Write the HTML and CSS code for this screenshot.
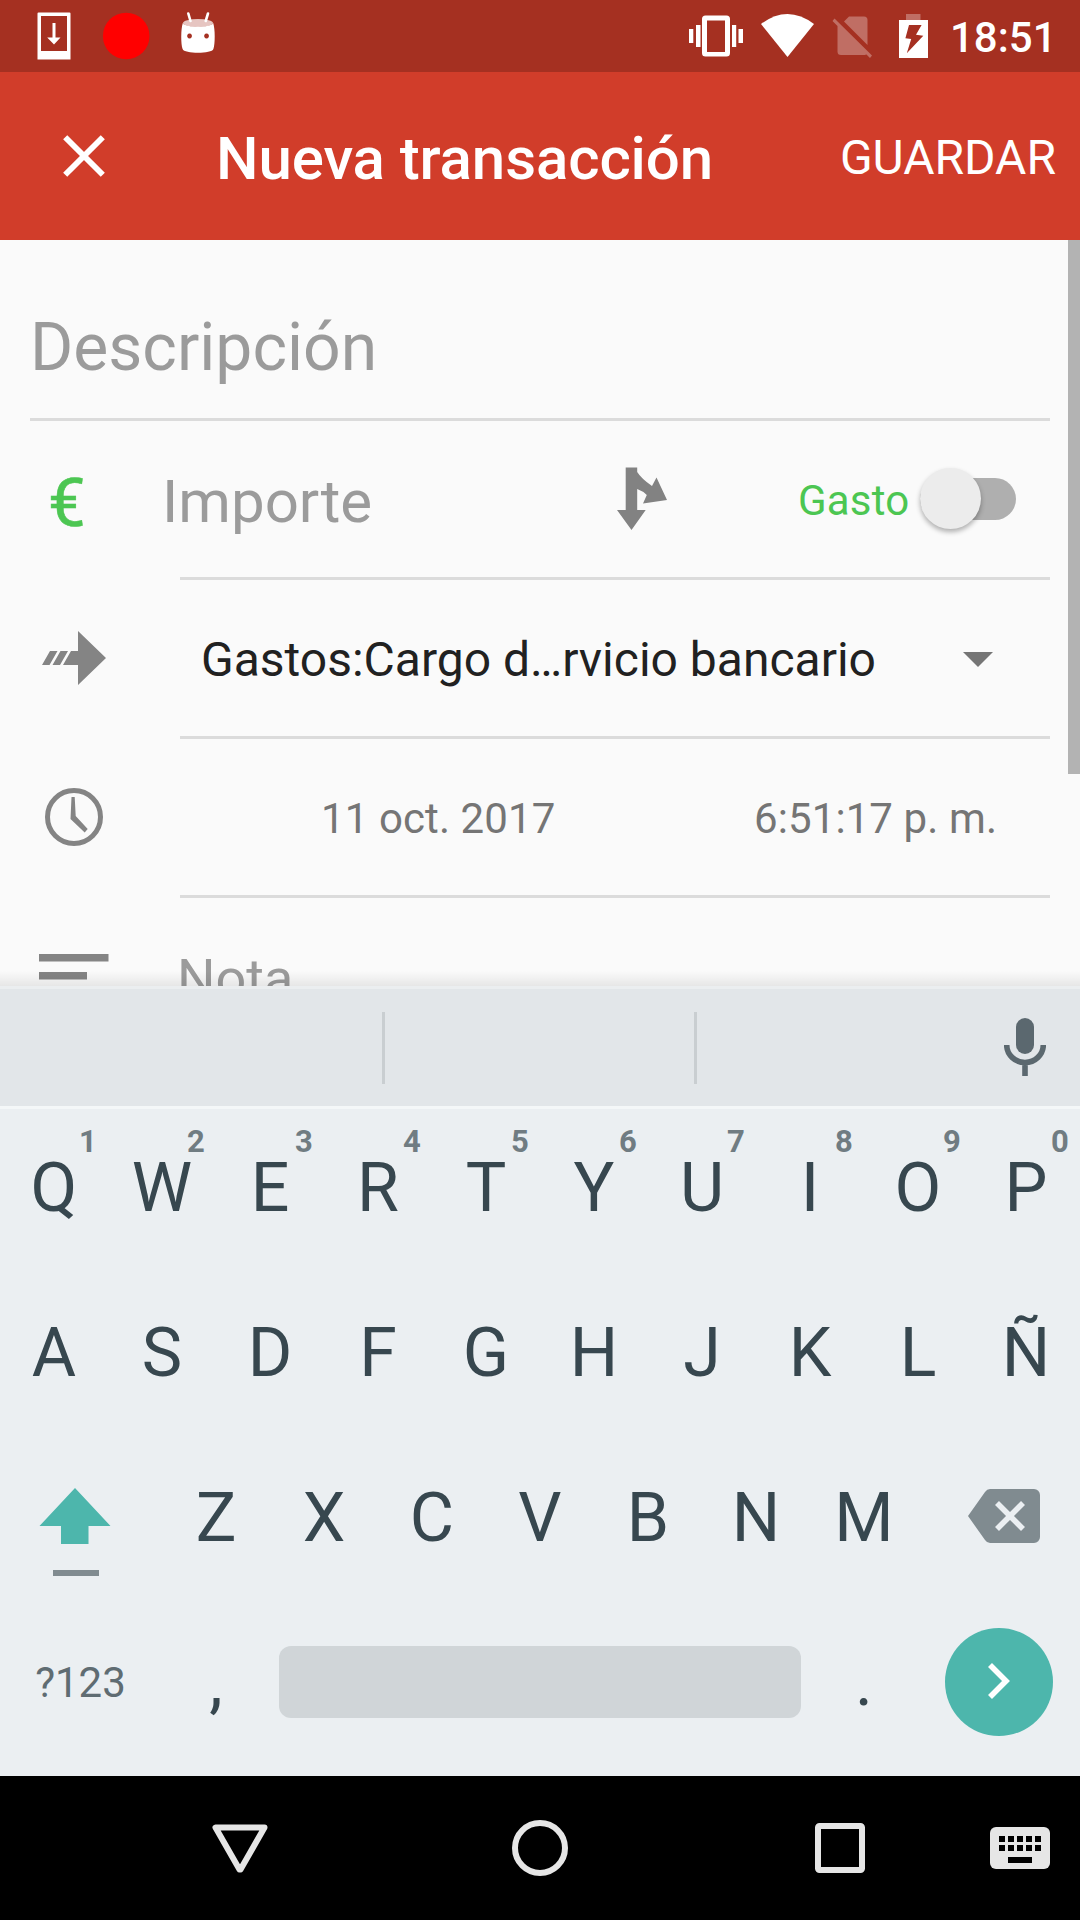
FILE: index.html
```html
<!DOCTYPE html>
<html lang="es">
<head>
<meta charset="utf-8">
<title>Nueva transacción</title>
<link rel="stylesheet" href="styles.css">
</head>
<body>
<div class="screen">
  <div class="status">
    <svg class="status-left" width="220" height="72" viewBox="0 0 220 72" fill="#fff">
      <path fill-rule="evenodd" d="M38.500 12.500h31a1 1 0 0 1 1 1v46h-33v-46a1 1 0 0 1 1-1zM41 16v35h26V16z"/>
      <path d="M52.500 23h3v14.500h5L54 44.500l-6.800-7h5.300z"/>
      <circle cx="126.200" cy="36" r="23.300" fill="#f00"/>
      <ellipse cx="198" cy="23" rx="15" ry="4" opacity=".72"/>
      <path d="M188.300 13.500l2.200 7.500M208 13.500l-2.300 7.500" stroke="#fff" stroke-width="2.600" stroke-linecap="round"/>
      <path fill-rule="evenodd" d="M182.800 23c2 5 28.400 5 30.400 0 2 6 2 21 .2 26-1.500 5-29.300 5-30.800 0-1.800-5-1.800-20 .2-26zM189.500 33.600a2.400 2.400 0 1 0 .1 0zM206.500 33.600a2.400 2.400 0 1 0 .1 0z"/>
    </svg>
    <svg class="status-right" width="250" height="72" viewBox="685 0 250 72" fill="#fff">
      <path fill-rule="evenodd" d="M705.500 15.500h21a3.500 3.500 0 0 1 3.500 3.500v34a3.500 3.500 0 0 1-3.500 3.500h-21a3.500 3.500 0 0 1-3.500-3.500V19a3.500 3.500 0 0 1 3.500-3.500zM707 20.500v31.500h18V20.500z"/>
      <path d="M696 25h4.500v22H696zM689 29h4.300v14H689zM732 25h4.200v22H732zM738.500 29h4.500v14h-4.500z"/>
      <path d="M761 24Q787.500 4 814 24L787.500 57z"/>
      <path opacity=".3" d="M849 16.500h15a3.500 3.500 0 0 1 3.500 3.500v25L844 21.500zM834.500 18.500l37.500 37-2 2.500-3.500-3.500-2 .5H841a3.500 3.500 0 0 1-3.500-3.500V26l-5-5z"/>
      <path opacity=".3" d="M906 14h14.500v6H906z"/>
      <path fill-rule="evenodd" d="M899 20h29v38h-29zM909 25l-3.600 13.300 5.800.7-4.400 14.300 16.500-17.600-7.300-1 5.600-9.700z"/>
    </svg>
    <span class="clock">18:51</span>
  </div>

  <div class="appbar">
    <svg class="close" width="42" height="42" viewBox="0 0 42 42"><path d="M2.200 2.200l37.600 37.600M39.800 2.200L2.200 39.800" stroke="#fff" stroke-width="5.800"/></svg>
    <h1 class="title">Nueva transacción</h1>
    <span class="save">GUARDAR</span>
  </div>

  <div class="form">
    <div class="scrollbar"></div>
    <div class="row row-desc"><span class="hint desc">Descripción</span></div>
    <div class="rule rule-full"></div>
    <div class="row">
      <span class="euro">€</span>
      <span class="hint amount">Importe</span>
      <svg class="split" width="50" height="63" viewBox="0 0 50 63" fill="#828282"><path d="M8.700 .5h11.500v4.500q4 6.500 14.800 14l4.500-8.500 10.500 22.500-24 3.500 3.800-8.500q-4-4-9.600-6v21h8.500L14.500 63 0 43h8.700z"/></svg>
      <span class="kind">Gasto</span>
      <span class="switch"><span class="thumb"></span></span>
    </div>
    <div class="rule"></div>
    <div class="row">
      <svg class="transfer" width="64" height="54" viewBox="0 0 64 54" fill="#848484"><path d="M36 0l28 27-28 27V34H21l8-14h7zM8 20h7.500l-8 14H0zM18.500 20H26l-8 14h-7.500z"/></svg>
      <span class="account">Gastos:Cargo d…rvicio bancario</span>
      <svg class="caret" width="30" height="15" viewBox="0 0 30 15" fill="#757575"><path d="M0 0h30L15 15z"/></svg>
    </div>
    <div class="rule"></div>
    <div class="row">
      <svg class="time-icon" width="58" height="58" viewBox="0 0 58 58"><circle cx="29" cy="29" r="26.500" fill="none" stroke="#848484" stroke-width="5"/><path fill="#848484" d="M26.500 9h3.200l1 19 12 13-3 3.500L25.500 31z"/></svg>
      <span class="date">11 oct. 2017</span>
      <span class="time">6:51:17 p. m.</span>
    </div>
    <div class="rule"></div>
    <div class="row">
      <svg class="note-icon" width="70" height="44" viewBox="0 0 70 44" fill="#848484"><path d="M0 0h69.500v7.500H0zM0 18h48v7.500H0zM0 36h69.500v7.500H0z"/></svg>
      <span class="hint note">Nota</span>
    </div>
    <div class="shade"></div>
  </div>

  <div class="suggest">
    <div class="slot slot-a"></div>
    <div class="slot slot-b"></div>
    <svg class="mic" width="42" height="58" viewBox="0 0 42 58"><rect x="12" width="18" height="36" rx="9" fill="#5b686f"/><path d="M2.700 27a18.300 17.500 0 0 0 36.600 0M21 44.500V58" fill="none" stroke="#5b686f" stroke-width="5.600"/></svg>
  </div>

  <div class="keyboard">
    <div class="keys keys-top">
      <span class="key">Q<b>1</b></span><span class="key">W<b>2</b></span><span class="key">E<b>3</b></span><span class="key">R<b>4</b></span><span class="key">T<b>5</b></span><span class="key">Y<b>6</b></span><span class="key">U<b>7</b></span><span class="key">I<b>8</b></span><span class="key">O<b>9</b></span><span class="key">P<b>0</b></span>
    </div>
    <div class="keys">
      <span class="key">A</span><span class="key">S</span><span class="key">D</span><span class="key">F</span><span class="key">G</span><span class="key">H</span><span class="key">J</span><span class="key">K</span><span class="key">L</span><span class="key">Ñ</span>
    </div>
    <div class="keys keys-shift">
      <svg class="shift" width="72" height="90" viewBox="0 0 72 90"><path fill="#4db6ac" d="M36 0l35.500 38H49.500v18H22V38H.5z"/><path fill="#808b90" d="M14 82h46v6H14z"/></svg>
      <span class="key">Z</span><span class="key">X</span><span class="key">C</span><span class="key">V</span><span class="key">B</span><span class="key">N</span><span class="key">M</span>
      <svg class="erase" width="72" height="54" viewBox="0 0 72 54"><path fill="#808b90" d="M22 0h44a6 6 0 0 1 6 6v42a6 6 0 0 1-6 6H22q-3 0-5-3L0 27 17 3q2-3 5-3z"/><path d="M29 14l26 26M55 14L29 40" stroke="#ebeff2" stroke-width="5.600"/></svg>
    </div>
    <div class="keys keys-bottom">
      <span class="symbols">?123</span>
      <span class="key">,</span>
      <span class="space"></span>
      <span class="key">.</span>
      <span class="enter"><svg width="22" height="36" viewBox="0 0 22 36"><path d="M2 2l16 16L2 34" fill="none" stroke="#fff" stroke-width="5.600"/></svg></span>
    </div>
  </div>

  <div class="nav">
    <svg class="nav-back" width="56" height="49" viewBox="0 0 56 49"><path d="M3.500 3.500h49L28.500 45.500h-1z" fill="none" stroke="#e6e6e6" stroke-width="6" stroke-linejoin="round"/></svg>
    <svg class="nav-home" width="56" height="56" viewBox="0 0 56 56"><circle cx="28" cy="28" r="25" fill="none" stroke="#e6e6e6" stroke-width="6"/></svg>
    <svg class="nav-recent" width="50" height="50" viewBox="0 0 50 50"><rect x="3" y="3" width="44" height="44" rx="1.500" fill="none" stroke="#e6e6e6" stroke-width="6"/></svg>
    <svg class="nav-ime" width="60" height="42" viewBox="0 0 60 42"><rect width="60" height="42" rx="6" fill="#e6e6e6"/><path d="M9 9h6v6H9zM18 9h6v6h-6zM27 9h6v6h-6zM36 9h6v6h-6zM45 9h6v6h-6zM9 18h6v6H9zM18 18h6v6h-6zM27 18h6v6h-6zM36 18h6v6h-6zM45 18h6v6h-6zM18 30h24v6H18z"/></svg>
  </div>
</div>
</body>
</html>
```
FILE: styles.css
```css
* { box-sizing: border-box; }
body { margin: 0; font-family: Roboto, sans-serif; }
svg { display: block; flex: none; }
span { white-space: nowrap; }

.screen { width: 1080px; height: 1920px; display: flex; flex-direction: column; overflow: hidden; }

.status { height: 72px; flex: none; display: flex; align-items: center; background: #a53021; color: #fff; }
.status-right { margin-left: 465px; }
.clock { margin-left: 15px; padding-top: 2px; font-size: 42px; font-weight: 500; }

.appbar { height: 168px; flex: none; display: flex; align-items: center; background: #d13d2a; color: #fff; }
.close { margin-left: 63px; }
.title { margin: 0; padding: 4px 0 0 111px; font-size: 60px; font-weight: 500; letter-spacing: -.1px; }
.save { margin-left: auto; padding: 3px 24px 0 0; font-size: 48px; }

.form { position: relative; height: 746px; flex: none; overflow: hidden; background: #fafafa; }
.scrollbar { position: absolute; top: 0; right: 0; width: 12px; height: 534px; background: #b3b3b3; }
.shade { position: absolute; left: 0; right: 0; bottom: 0; height: 15px; background: linear-gradient(rgba(0,0,0,0), rgba(0,0,0,.08)); }
.row { height: 156px; display: flex; align-items: center; }
.row-desc { height: 178px; }
.rule { height: 3px; margin: 0 30px 0 180px; background: #dbdbdb; }
.rule-full { margin-left: 30px; }
.hint { color: #9b9b9b; }
.desc { padding: 37px 0 0 30px; font-size: 66px; }
.euro { width: 162px; padding: 7px 0 0 48px; color: #4cc652; font-size: 67px; -webkit-text-stroke: .5px #4cc652; }
.amount { width: 455px; padding-top: 4px; font-size: 60px; }
.split { margin-top: -1px; }
.kind { width: 122px; margin-left: 131px; padding-top: 3px; color: #4cc652; font-size: 42px; letter-spacing: .2px; }
.switch { width: 96px; height: 42px; border-radius: 21px; background: #afafaf; }
.thumb { display: block; width: 61px; height: 61px; margin: -10px 0 0; border-radius: 50%; background: #ececec; box-shadow: 0 3px 5px rgba(0,0,0,.3); }
.transfer { margin-left: 42px; }
.account { width: 762px; margin-left: 95px; padding-top: 2px; color: #212121; font-size: 48px; }
.caret { margin-top: 3px; }
.time-icon { margin-left: 45px; }
.date, .time { padding-top: 2px; color: #757575; font-size: 42px; letter-spacing: .1px; }
.date { width: 433px; margin-left: 218px; }
.note-icon { margin-left: 39px; }
.note { margin-left: 68px; padding-top: 5px; font-size: 54px; }

.suggest { height: 123px; flex: none; display: flex; align-items: center; background: #e2e6e9; border-top: 3px solid #ebeef0; border-bottom: 3px solid #f4f7f8; }
.slot { height: 72px; border-right: 3px solid #c9ced1; }
.slot-a { width: 385px; }
.slot-b { width: 312px; }
.mic { margin: 0 0 2px 307px; }

.keyboard { height: 667px; flex: none; background: #ebeff2; color: #37474f; }
.keys { height: 165px; display: flex; align-items: center; }
.key { position: relative; width: 108px; flex: none; font-size: 68px; line-height: 156px; text-align: center; }
.key b { position: absolute; left: 79px; top: 14px; color: #707c82; font-size: 31px; line-height: 36px; }
.keys-top { height: 161px; padding-top: 1px; align-items: flex-start; }
.shift { margin: 31px 51px 0 39px; }
.erase { margin: 0 0 4px 50px; }
.keys-bottom { height: 163px; }
.symbols { width: 162px; padding: 2px 1px 0 0; text-align: center; font-size: 42px; color: #5f6c72; }
.space { width: 522px; height: 72px; margin: 0 9px; border-radius: 12px; background: #d0d5d8; }
.enter { display: flex; align-items: center; width: 108px; height: 108px; margin-left: 27px; padding: 0 0 2px 43px; border-radius: 50%; background: #4db6ac; }

.nav { height: 144px; flex: none; display: flex; align-items: center; background: #000; }
.nav-back { margin-left: 212px; }
.nav-home { margin-left: 244px; }
.nav-recent { margin-left: 247px; }
.nav-ime { margin-left: 125px; }
```
